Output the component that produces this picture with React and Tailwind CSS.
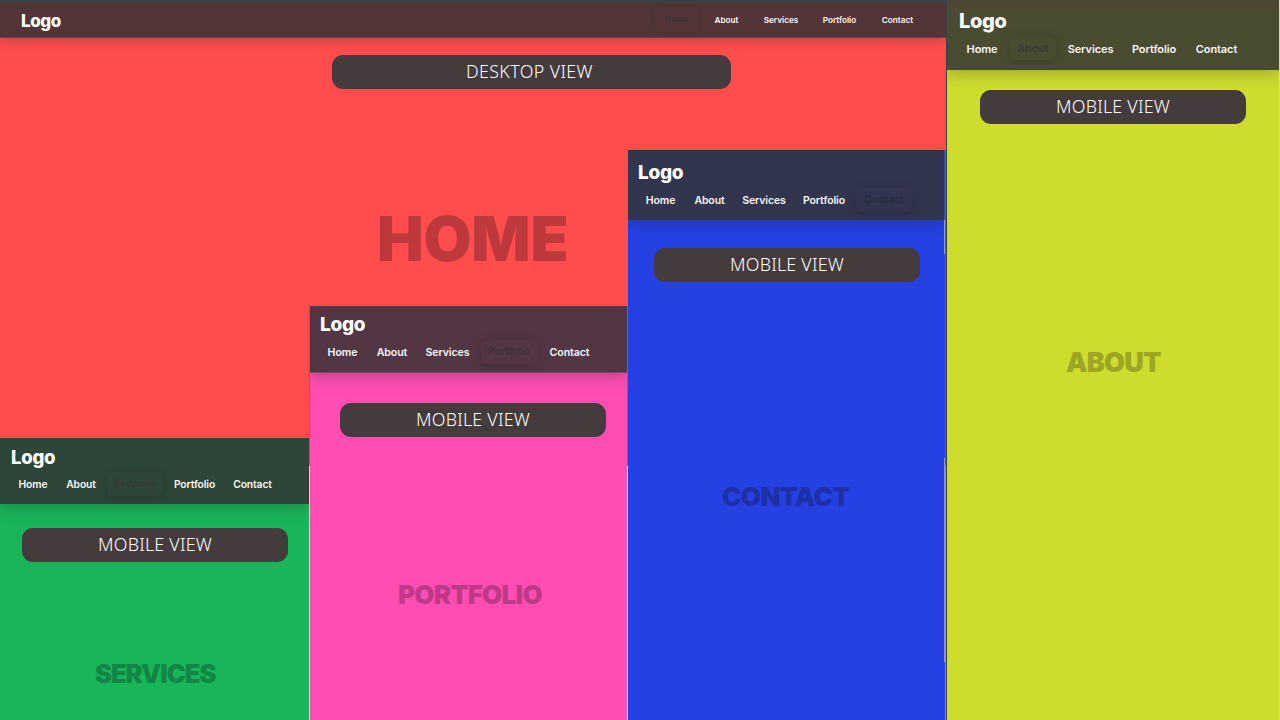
const LINKS = ["Home", "About", "Services", "Portfolio", "Contact"];

function Pill({ label, className }) {
  return (
    <div className={`flex h-[34px] shrink-0 items-center justify-center rounded-[11px] bg-[#453b3c] font-['Noto_Sans',sans-serif] text-[17.8px] leading-none font-light whitespace-nowrap text-white ${className}`}>
      <span>{label}</span>
    </div>
  );
}

function NavLinks({ active, widths, className, activeClass }) {
  return (
    <nav className={`flex items-center whitespace-nowrap text-[#f8f6f6] ${className}`}>
      {LINKS.map((name, i) => (
        <a
          key={name}
          className={`flex shrink-0 items-center justify-center ${widths[i]} ${name === active ? activeClass : ""}`}
        >
          {name}
        </a>
      ))}
    </nav>
  );
}

function MobilePanel({ name, panel, header, logo, nav, widths, active, pill, title }) {
  return (
    <section className={`flex shrink-0 flex-col overflow-hidden ${panel}`}>
      <header className={`flex shrink-0 flex-col items-start shadow-[0_3px_15px_rgba(40,40,40,0.32)] ${header}`}>
        <div className={`leading-[20px] font-extrabold text-white ${logo}`}>Logo</div>
        <NavLinks active={name} widths={widths} className={nav} activeClass={active} />
      </header>
      <Pill label="MOBILE VIEW" className={`w-[266px] tracking-[0.25px] ${pill}`} />
      <h2 className={`w-fit font-black whitespace-nowrap uppercase ${title}`}>{name}</h2>
    </section>
  );
}

const ACTIVE = "h-[24px] -mt-[2px] rounded-[5px] shadow-[0_2px_8px_rgba(35,35,35,0.36)]";

export default function App() {
  return (
    <main className="flex h-[720px] w-[1280px] overflow-hidden bg-[#3c4043] font-['Inter',sans-serif]">
      <div className="grid h-[720px] w-[946px] shrink-0 grid-cols-1 grid-rows-1">
        <section className="col-start-1 row-start-1 flex flex-col bg-[#ff4d4d]">
          <header className="flex h-[38px] shrink-0 items-center border-t-[3px] border-b border-t-[#3e4143] border-b-[#744141] bg-[#523637] pr-[32px] pl-[21px] shadow-[0_2px_10px_rgba(40,40,40,0.3)]">
            <div className="mt-[1px] text-[17px] leading-[20px] font-extrabold tracking-[-0.4px] text-white">Logo</div>
            <NavLinks
              active="Home"
              widths={["w-[44px]", "w-[25px]", "w-[34px]", "w-[33px]", "w-[33px]"]}
              className="ml-auto gap-[25px] text-[8.2px] leading-[12px] font-semibold"
              activeClass="h-[25px] -mt-[2px] -mr-[10px] rounded-[4px] text-[#3b3232] shadow-[0_1px_6px_rgba(35,35,35,0.38)]"
            />
          </header>
          <Pill label="DESKTOP VIEW" className="mt-[17px] ml-[332px] w-[399px] pr-[4px] tracking-[0.4px]" />
          <h1 className="mt-[98px] ml-[377px] w-fit text-[62px] leading-[104px] font-black tracking-[-0.1px] text-[#be393b]">HOME</h1>
        </section>

        <div className="z-10 col-start-1 row-start-1 flex items-end">
          <MobilePanel
            name="Services"
            panel="h-[282px] w-[309px] bg-[#19b659]"
            header="h-[66px] w-[309px] bg-[#2e4637]"
            logo="mt-[9px] ml-[11px] text-[18.6px] tracking-[-0.3px]"
            nav="mt-[6px] ml-[18px] h-[24px] gap-[18px] text-[10.3px] font-semibold tracking-[-0.1px]"
            widths={["w-[30px]", "w-[30px]", "w-[56px] -mx-[7px]", "w-[41px]", "w-[39px]"]}
            active={`${ACTIVE} text-[#353a36]`}
            pill="mt-[24px] ml-[22px]"
            title="mt-[94px] ml-[95px] text-[25.5px] leading-[36px] tracking-[-1px] text-[#128646]"
          />
          <div className="flex h-[414px] w-px shrink-0 flex-col">
            <div className="h-[160px] bg-[#d74646]" />
            <div className="flex-1 bg-[#f3c5dc]" />
          </div>
          <MobilePanel
            name="Portfolio"
            panel="h-[414px] w-[317px] bg-[#ff4db4]"
            header="h-[67px] w-[317px] border-b border-[#854267] bg-[#523644]"
            logo="mt-[9px] ml-[10px] text-[19px] tracking-[-0.3px]"
            nav="mt-[6px] ml-[17px] h-[24px] gap-[18.5px] text-[10.6px] font-semibold tracking-[-0.1px]"
            widths={["w-[31px]", "w-[31px]", "w-[43px]", "w-[57px] -mx-[7px]", "w-[41px]"]}
            active={`${ACTIVE} text-[#3d3238]`}
            pill="mt-[30px] ml-[30px]"
            title="mt-[140px] ml-[88px] text-[26px] leading-[36px] tracking-[-0.7px] text-[#be3a88]"
          />
          <div className="flex h-[414px] w-px shrink-0 flex-col">
            <div className="h-[160px] bg-[#cc455a]" />
            <div className="flex-1 bg-[#f5deed]" />
          </div>
          <MobilePanel
            name="Contact"
            panel="h-[570px] w-[316px] bg-[#2541e4]"
            header="h-[70px] w-[316px] border-t border-[#3b2933] bg-[#32354e]"
            logo="mt-[12px] ml-[10px] text-[19px] tracking-[-0.3px]"
            nav="mt-[6px] ml-[17px] h-[24px] gap-[18px] text-[10.5px] font-semibold tracking-[-0.1px]"
            widths={["w-[31px]", "w-[31px]", "w-[42px]", "w-[42px]", "w-[56px] -mx-[7px]"]}
            active={`${ACTIVE} text-[#292b3c]`}
            pill="mt-[28px] ml-[26px]"
            title="mt-[197px] ml-[94px] text-[26px] leading-[36px] tracking-[-0.6px] text-[#1c30a8]"
          />
          <div className="flex h-[570px] w-px shrink-0 flex-col">
            <div className="h-[70px] bg-[#324fa0]" />
            <div className="h-[34px] bg-[#8899e8]" />
            <div className="h-[204px] bg-[#2541e4]" />
            <div className="h-[204px] bg-[#8793df]" />
            <div className="flex-1 bg-[#2541e4]" />
          </div>
          <div className="flex h-[570px] w-px shrink-0 flex-col">
            <div className="h-[316px] bg-[#a84355]" />
            <div className="flex-1 bg-[#8d91ad]" />
          </div>
        </div>
      </div>
      <div className="w-px shrink-0 bg-[#3c4043]" />
      <MobilePanel
        name="About"
        panel="h-[720px] w-[333px] border-r border-[#dbe65a] bg-[#cedc2e]"
        header="h-[70px] w-[332px] bg-[#4a4c32] bg-linear-to-b from-[#504535] to-[#4a4c32] to-25%"
        logo="mt-[11px] ml-[12px] text-[20px] tracking-[-0.3px]"
        nav="mt-[6px] ml-[19px] h-[24px] gap-[19px] text-[11px] font-semibold tracking-[-0.1px]"
        widths={["w-[32px]", "w-[46px] -mx-[7px]", "w-[45px]", "w-[44px]", "w-[43px]"]}
        active={`${ACTIVE} text-[#383a31]`}
        pill="mt-[20px] ml-[33px]"
        title="mt-[221px] ml-[119px] text-[27px] leading-[36px] tracking-[-0.7px] text-[#9ca524]"
      />
    </main>
  );
}
